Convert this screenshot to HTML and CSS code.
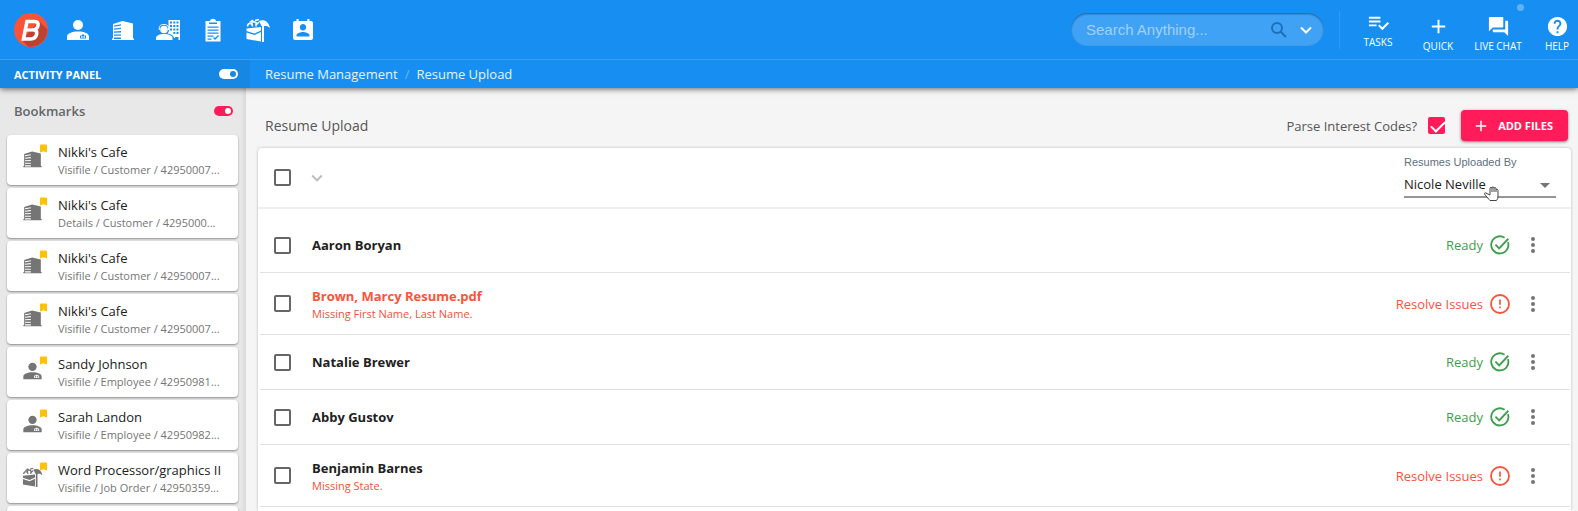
FILE: index.html
```
<!DOCTYPE html>
<html lang="en">
<head>
  <meta charset="UTF-8">
  <meta name="viewport" content="width=device-width, initial-scale=1.0">
  <title>Resume Upload</title>
  <link rel="stylesheet" href="styles.css">
</head>
<body>
  <!-- Shared icons -->
  <svg class="sprite" aria-hidden="true">
    <symbol id="i-person" viewBox="0 0 24 24">
      <circle cx="12" cy="7" r="5"/>
      <path fill-rule="evenodd" d="M1 22v-3.500C1 15.500 6 13.500 12 13.500s11 2 11 5V22zM14 17.500v3h6v-3h-2v-1h-2v1zm1 .8h1.500v1.500H15zm2.500 0H19v1.500h-1.500z"/>
    </symbol>
    <symbol id="i-building" viewBox="0 0 24 24">
      <path fill-rule="evenodd" d="M1 22v-1.500h1V6l9.500-3L22 5.500v15h1V22zM3 7.500v1.300l7-1.300V6.200zm0 3v1.300l7-.8V9.700zm0 3v1.300l7-.4v-1.300zm0 3v1.300h7v-1.300zm0 3V21h7v-1.500z"/>
    </symbol>
    <symbol id="i-contact" viewBox="0 0 24 24">
      <path fill-rule="evenodd" d="M12.500 2H24v20h-1.500v-3H19v1h-1c-.3-2-2-3.500-4.500-4l-2-.5c1.500-1.500 2-3.500 1.500-6l-.5-1zM14 3.500v2h2v-2zm3.300 0v2h2v-2zm3.200 0v2h2v-2zM14 7v2h2V7zm3.300 0v2h2V7zm3.200 0v2h2V7zM14 10.500v2h2v-2zm3.300 0v2h2v-2zm3.200 0v2h2v-2zm-3.200 3.500v2h2v-2zm3.200 0v2h2v-2z"/>
      <circle cx="8" cy="11.500" r="3.800"/>
      <path d="M3.300 12V9.500C4 6.500 6 6.500 8 6.500s4 .3 4.500 3V12" fill="none" stroke="currentColor" stroke-width="1"/>
      <path d="M0 22v-2c0-2.500 4-4 8-4s8.500 1.500 8.500 4v2z"/>
    </symbol>
    <symbol id="i-clipboard" viewBox="0 0 24 24">
      <path fill-rule="evenodd" d="M4.500 3H9c.5-3 5.500-3 6 0h4.500v20.500h-15zM8 4.500V6h8V4.500zM6.500 8.500v1.200h11V8.500zm0 3v1.200h11v-1.200zm0 3v1.200h11v-1.200zm0 3v1.200h6v-1.200zm0 3v1.200h4v-1.200zm5.500-.5 2 2 4-4-1-1-3 3-1-1z"/>
    </symbol>
    <symbol id="i-jobs" viewBox="0 0 24 24">
      <path d="M.5 10.500L15 9v3.500L8.500 15.500l-8-2.500zM.5 14.500l8 2.500L15 14v9.500L.5 21zM16 4h2v20h-2zM13 3c5-2 9.500 0 11 7l-3-2h-5.500z"/>
      <path d="M1.500 8.500q0-3 2.500-3t2.500 3M6 7V3l4 1.500v4M10 7l3-3M3.500 4.500L7 2M9 2.500l4-1" fill="none" stroke="currentColor" stroke-width="1.500"/>
    </symbol>
    <symbol id="i-badge" viewBox="0 0 24 24">
      <path d="M20 3h-1.500V1h-2.200v2H7.700V1H5.500v2H4c-1.110 0-2 .9-2 2v15c0 1.100.89 2 2 2h16c1.100 0 2-.9 2-2V5c0-1.100-.9-2-2-2zm-8 3c1.800 0 3.200 1.400 3.200 3.200S13.800 12.400 12 12.400 8.800 11 8.800 9.200 10.200 6 12 6zm6.500 12.500h-13v-1c0-2.200 4.300-3.400 6.500-3.400s6.500 1.200 6.500 3.400z"/>
    </symbol>
    <symbol id="i-chevron" viewBox="0 0 24 24">
      <path d="M7.410 8.590 12 13.170l4.590-4.580L18 10l-6 6-6-6z"/>
    </symbol>
    <symbol id="i-plus" viewBox="0 0 24 24">
      <path d="M19 13h-6v6h-2v-6H5v-2h6V5h2v6h6z"/>
    </symbol>
    <symbol id="i-flag" viewBox="0 0 8 9">
      <path d="M1 0h6q1 0 1 1v8L4 7.500 0 9V1q0-1 1-1z"/>
    </symbol>
    <symbol id="i-ready" viewBox="0 0 24 24">
      <path d="M21.500 8.500A10.300 10.300 0 1 1 17.500 3.300" fill="none" stroke="currentColor" stroke-width="2.200"/>
      <path d="M6.500 11.500l4.500 4.500L22 4.500" fill="none" stroke="currentColor" stroke-width="2.200"/>
    </symbol>
    <symbol id="i-issue" viewBox="0 0 24 24">
      <circle cx="12" cy="12" r="10.800" fill="none" stroke="currentColor" stroke-width="2.200"/>
      <path d="M11 6.500h2V13h-2zM11 15h2v2.200h-2z"/>
    </symbol>
    <symbol id="i-more" viewBox="0 0 6 18">
      <circle cx="3" cy="3" r="2"/><circle cx="3" cy="9" r="2"/><circle cx="3" cy="15" r="2"/>
    </symbol>
  </svg>

  <header class="header">
    <div class="topbar">
      <a class="logo" href="#" aria-label="Home">
        <svg viewBox="0 0 34 34">
          <circle cx="17" cy="17" r="17" fill="#fb5338"/>
          <path d="M25 8l8.500 8.500A17 17 0 0 1 14 33.500L8 27z" fill="#bf4230"/>
          <path d="M13 8.500h7.500q4.300 0 3.500 4-.6 3.300-3.500 4.200 2.800.9 2.100 4.500-.9 4.800-6 4.800H9.500z" fill="none" stroke="#fff" stroke-width="3.600"/>
          <path d="M12 17h9" stroke="#fff" stroke-width="3.200"/>
        </svg>
      </a>
      <nav class="main-nav">
        <a href="#" aria-label="Employees"><svg class="icon"><use href="#i-person"/></svg></a>
        <a href="#" aria-label="Customers"><svg class="icon"><use href="#i-building"/></svg></a>
        <a href="#" aria-label="Contacts"><svg class="icon"><use href="#i-contact"/></svg></a>
        <a href="#" aria-label="Assignments"><svg class="icon"><use href="#i-clipboard"/></svg></a>
        <a href="#" aria-label="Job orders"><svg class="icon"><use href="#i-jobs"/></svg></a>
        <a href="#" aria-label="Prospects"><svg class="icon"><use href="#i-badge"/></svg></a>
      </nav>
      <form class="search">
        <input type="text" placeholder="Search Anything..." aria-label="Search Anything">
        <button type="button" class="search-btn" aria-label="Search">
          <svg viewBox="0 0 16 16"><circle cx="6" cy="6" r="5" fill="none" stroke="currentColor" stroke-width="2"/><path d="M9.500 9.500l5.500 5.500" stroke="currentColor" stroke-width="2.200"/></svg>
        </button>
        <button type="button" class="search-more" aria-label="Search options">
          <svg viewBox="0 0 12 8"><path d="M1 1.500l5 5 5-5" fill="none" stroke="currentColor" stroke-width="2"/></svg>
        </button>
      </form>
      <div class="tools">
        <button type="button" class="tool tool-tasks">
          <svg class="icon" viewBox="0 0 24 24"><path d="M14 10H2v2h12zm0-4H2v2h12zM2 16h8v-2H2zm19.500-4.500L23 13l-6.990 7-4.510-4.500L13 14l3.010 3z"/></svg>
          <span>TASKS</span>
        </button>
        <button type="button" class="tool">
          <svg class="icon"><use href="#i-plus"/></svg>
          <span>QUICK</span>
        </button>
        <button type="button" class="tool">
          <svg class="icon" viewBox="0 0 24 24"><path d="M21 6h-2v9H6v2c0 .55.450 1 1 1h11l4 4V7c0-.55-.45-1-1-1zm-4 6V3c0-.55-.45-1-1-1H3c-.55 0-1 .45-1 1v14l4-4h10c.55 0 1-.45 1-1z"/></svg>
          <span>LIVE CHAT</span>
          <i class="dot"></i>
        </button>
        <button type="button" class="tool tool-help">
          <svg class="icon" viewBox="0 0 24 24"><path d="M12 2C6.480 2 2 6.480 2 12s4.480 10 10 10 10-4.480 10-10S17.520 2 12 2zm1 17h-2v-2h2v2zm2.070-7.750-.9.920C13.450 12.900 13 13.500 13 15h-2v-.5c0-1.100.45-2.100 1.170-2.830l1.240-1.260c.37-.36.59-.86.59-1.410 0-1.100-.9-2-2-2s-2 .9-2 2H8c0-2.210 1.790-4 4-4s4 1.790 4 4c0 .88-.36 1.680-.93 2.250z"/></svg>
          <span>HELP</span>
        </button>
      </div>
    </div>
    <div class="subbar">
      <div class="activity">
        <label for="activity">ACTIVITY PANEL</label>
        <input type="checkbox" id="activity" class="toggle toggle-light" checked>
      </div>
      <nav class="breadcrumb">
        <a href="#">Resume Management</a>
        <span class="sep">/</span>
        <a href="#">Resume Upload</a>
      </nav>
    </div>
  </header>

  <div class="layout">
    <aside class="sidebar">
      <div class="sidebar-head">
        <label for="bookmarks">Bookmarks</label>
        <input type="checkbox" id="bookmarks" class="toggle" checked>
      </div>
      <ul class="bookmarks">
        <li class="bookmark">
          <div class="bookmark-icon"><svg class="kind"><use href="#i-building"/></svg><svg class="flag"><use href="#i-flag"/></svg></div>
          <div><p class="name">Nikki's Cafe</p><p class="path">Visifile / Customer / 42950007...</p></div>
        </li>
        <li class="bookmark">
          <div class="bookmark-icon"><svg class="kind"><use href="#i-building"/></svg><svg class="flag"><use href="#i-flag"/></svg></div>
          <div><p class="name">Nikki's Cafe</p><p class="path">Details / Customer / 4295000...</p></div>
        </li>
        <li class="bookmark">
          <div class="bookmark-icon"><svg class="kind"><use href="#i-building"/></svg><svg class="flag"><use href="#i-flag"/></svg></div>
          <div><p class="name">Nikki's Cafe</p><p class="path">Visifile / Customer / 42950007...</p></div>
        </li>
        <li class="bookmark">
          <div class="bookmark-icon"><svg class="kind"><use href="#i-building"/></svg><svg class="flag"><use href="#i-flag"/></svg></div>
          <div><p class="name">Nikki's Cafe</p><p class="path">Visifile / Customer / 42950007...</p></div>
        </li>
        <li class="bookmark">
          <div class="bookmark-icon"><svg class="kind"><use href="#i-person"/></svg><svg class="flag"><use href="#i-flag"/></svg></div>
          <div><p class="name">Sandy Johnson</p><p class="path">Visifile / Employee / 42950981...</p></div>
        </li>
        <li class="bookmark">
          <div class="bookmark-icon"><svg class="kind"><use href="#i-person"/></svg><svg class="flag"><use href="#i-flag"/></svg></div>
          <div><p class="name">Sarah Landon</p><p class="path">Visifile / Employee / 42950982...</p></div>
        </li>
        <li class="bookmark">
          <div class="bookmark-icon"><svg class="kind"><use href="#i-jobs"/></svg><svg class="flag"><use href="#i-flag"/></svg></div>
          <div><p class="name">Word Processor/graphics II</p><p class="path">Visifile / Job Order / 42950359...</p></div>
        </li>
        <li class="bookmark"></li>
      </ul>
    </aside>

    <main class="main">
      <div class="page-head">
        <h1>Resume Upload</h1>
        <label for="parse">Parse Interest Codes?</label>
        <input type="checkbox" id="parse" class="check check-pink" checked>
        <button type="button" class="add-btn"><svg><use href="#i-plus"/></svg>ADD FILES</button>
      </div>

      <section class="card">
        <div class="card-head">
          <input type="checkbox" class="check" aria-label="Select all">
          <button type="button" class="expand" aria-label="Selection options"><svg><use href="#i-chevron"/></svg></button>
          <div class="field">
            <label for="uploadedBy">Resumes Uploaded By</label>
            <select id="uploadedBy">
              <option>Nicole Neville</option>
            </select>
            <svg class="caret" viewBox="0 0 10 5"><path d="M0 0h10L5 5z"/></svg>
            <svg class="pointer" viewBox="0 0 15 17"><path d="M5 14.500L.8 9.500Q0 7.800 1.500 7.800L6 10V3q.8-1.500 2 0V2.500q1-1.200 2 0v.5q1.200-1 2 .3v1q1.600-.6 2 1V11q0 3-1.500 4.500H6z" fill="#fff" stroke="#444" stroke-width="1"/><path d="M8 3v4M10 3v4M12 4v3" stroke="#444" stroke-width="1"/></svg>
          </div>
        </div>
        <ul class="rows">
          <li class="row">
            <input type="checkbox" class="check" aria-label="Aaron Boryan">
            <div class="info"><p class="person">Aaron Boryan</p></div>
            <span class="status ready">Ready<svg><use href="#i-ready"/></svg></span>
            <button type="button" class="more" aria-label="More"><svg><use href="#i-more"/></svg></button>
          </li>
          <li class="row">
            <input type="checkbox" class="check" aria-label="Brown, Marcy Resume.pdf">
            <div class="info"><p class="person error">Brown, Marcy Resume.pdf</p><p class="missing">Missing First Name, Last Name.</p></div>
            <a href="#" class="status issue">Resolve Issues<svg><use href="#i-issue"/></svg></a>
            <button type="button" class="more" aria-label="More"><svg><use href="#i-more"/></svg></button>
          </li>
          <li class="row">
            <input type="checkbox" class="check" aria-label="Natalie Brewer">
            <div class="info"><p class="person">Natalie Brewer</p></div>
            <span class="status ready">Ready<svg><use href="#i-ready"/></svg></span>
            <button type="button" class="more" aria-label="More"><svg><use href="#i-more"/></svg></button>
          </li>
          <li class="row">
            <input type="checkbox" class="check" aria-label="Abby Gustov">
            <div class="info"><p class="person">Abby Gustov</p></div>
            <span class="status ready">Ready<svg><use href="#i-ready"/></svg></span>
            <button type="button" class="more" aria-label="More"><svg><use href="#i-more"/></svg></button>
          </li>
          <li class="row">
            <input type="checkbox" class="check" aria-label="Benjamin Barnes">
            <div class="info"><p class="person">Benjamin Barnes</p><p class="missing">Missing State.</p></div>
            <a href="#" class="status issue">Resolve Issues<svg><use href="#i-issue"/></svg></a>
            <button type="button" class="more" aria-label="More"><svg><use href="#i-more"/></svg></button>
          </li>
        </ul>
      </section>
    </main>
  </div>
</body>
</html>
```
FILE: styles.css
```
* {
  margin: 0;
  padding: 0;
  box-sizing: border-box;
}

body {
  display: flex;
  flex-direction: column;
  height: 100vh;
  overflow: hidden;
  background-color: #f5f5f5;
  color: #212121;
  font-family: "Open Sans", "Noto Sans", sans-serif;
  font-size: 13px;
}

ul {
  list-style: none;
}

a {
  color: inherit;
  text-decoration: none;
}

button {
  border: none;
  background: none;
  color: inherit;
  font-family: inherit;
  cursor: pointer;
}

svg {
  display: block;
  fill: currentColor;
}

.sprite {
  position: absolute;
  width: 0;
  height: 0;
}

.icon {
  width: 24px;
  height: 24px;
}

/* Header */
.header {
  position: relative;
  z-index: 2;
  flex: none;
  background-color: #178ff2;
  color: #fff;
  box-shadow: 0 1px 6px rgba(0, 0, 0, 0.6);
}

.topbar {
  display: flex;
  align-items: center;
  height: 60px;
  padding-left: 14px;
  border-bottom: 1px solid #3a9ff5;
}

.logo svg {
  width: 34px;
  height: 34px;
}

.main-nav {
  display: flex;
  gap: 21px;
  margin-left: 18px;
}

.search {
  display: flex;
  align-items: center;
  width: 253px;
  height: 33px;
  margin-left: auto;
  padding: 0 12px 0 15px;
  border-radius: 17px;
  background-color: #40a2f5;
  box-shadow: inset 0 1px 2px rgba(0, 50, 100, 0.6);
}

.search input {
  flex: 1;
  min-width: 0;
  border: none;
  outline: none;
  background: none;
  color: #fff;
  font-family: "Liberation Sans", Arial, sans-serif;
  font-size: 15px;
}

.search input::placeholder {
  color: #a0d1fa;
}

.search-btn {
  margin-right: 13px;
  color: #1e6fb9;
}

.search-btn svg {
  width: 16px;
  height: 16px;
}

.search-more svg {
  width: 12px;
  height: 8px;
}

.tools {
  display: flex;
  align-items: flex-start;
  height: 38px;
  margin-left: 15px;
  padding-left: 8px;
  border-left: 1px solid #2f99f4;
}

.tool {
  position: relative;
  display: flex;
  flex-direction: column;
  align-items: center;
  gap: 1px;
  width: 60px;
  padding-top: 4px;
  font-size: 10px;
  line-height: 14px;
}

.tool .icon {
  width: 23px;
  height: 23px;
}

.tool-tasks {
  padding-top: 0;
}

.tool-help {
  width: 42px;
  margin-left: 8px;
}

.dot {
  position: absolute;
  top: -7px;
  right: 4px;
  width: 7px;
  height: 7px;
  border-radius: 50%;
  background-color: #5fb2f7;
}

.subbar {
  display: flex;
  height: 28px;
}

.activity {
  display: flex;
  align-items: center;
  justify-content: space-between;
  width: 250px;
  padding: 0 12px 0 14px;
  background-color: #1687e3;
  font-size: 11px;
  font-weight: 700;
}

.toggle {
  display: flex;
  align-items: center;
  justify-content: flex-end;
  width: 19px;
  height: 10px;
  padding: 2px;
  border-radius: 5px;
  background-color: #ff1c58;
  appearance: none;
}

.toggle::before {
  content: "";
  width: 6px;
  height: 6px;
  border-radius: 50%;
  background-color: #fff;
}

.toggle-light {
  background-color: #fff;
}

.toggle-light::before {
  background-color: #1687e3;
}

.breadcrumb {
  display: flex;
  align-items: center;
  gap: 7px;
  padding-left: 15px;
}

.breadcrumb a {
  color: #e6f3fe;
}

.breadcrumb .sep {
  color: #6bb7f8;
}

/* Layout */
.layout {
  display: flex;
  flex: 1;
  min-height: 0;
}

.sidebar {
  flex: none;
  width: 246px;
  padding: 0 8px 0 7px;
  overflow: hidden;
  background-color: #e8e8e8;
  box-shadow: inset -4px 0 4px -2px rgba(0, 0, 0, 0.08);
}

.sidebar-head {
  display: flex;
  align-items: center;
  justify-content: space-between;
  height: 47px;
  padding: 0 5px 1px 7px;
  color: #666;
  font-weight: 600;
}

.bookmarks {
  display: flex;
  flex-direction: column;
  gap: 3px;
}

.bookmark {
  display: flex;
  flex: none;
  align-items: center;
  height: 50px;
  padding-left: 15px;
  border-radius: 4px;
  background-color: #fff;
  box-shadow: 0 1px 2px rgba(0, 0, 0, 0.4);
}

.bookmark-icon {
  position: relative;
  width: 36px;
  height: 36px;
  padding-top: 7px;
  color: #757575;
}

.kind {
  width: 21px;
  height: 20px;
}

.flag {
  position: absolute;
  top: 2px;
  left: 18px;
  width: 7px;
  height: 9px;
  color: #ffc107;
}

.name {
  line-height: 18px;
}

.path {
  color: #757575;
  font-size: 11px;
  line-height: 17px;
}

/* Main */
.main {
  display: flex;
  flex: 1;
  flex-direction: column;
  min-width: 0;
  padding: 0 7px 0 12px;
}

.page-head {
  display: flex;
  align-items: center;
  padding: 22px 3px 7px 7px;
  color: #555;
}

h1 {
  margin-right: auto;
  font-size: 14px;
  font-weight: 400;
}

.check {
  flex: none;
  width: 17px;
  height: 17px;
  border: 2px solid #666;
  border-radius: 2px;
  background-color: #fff;
  appearance: none;
}

.check-pink {
  margin: 0 16px 0 11px;
  border: none;
  background-color: #ff1c58;
}

.check-pink::before {
  content: "";
  display: block;
  width: 12px;
  height: 6px;
  margin: 4px 0 0 3px;
  border: solid #fff;
  border-width: 0 0 2px 2px;
  transform: rotate(-45deg);
}

.add-btn {
  display: flex;
  align-items: center;
  gap: 8px;
  height: 31px;
  padding: 0 15px 0 11px;
  border-radius: 4px;
  background-color: #ff1c58;
  color: #fff;
  font-size: 11px;
  font-weight: 700;
  box-shadow: 0 1px 3px rgba(0, 0, 0, 0.5);
}

.add-btn svg {
  width: 18px;
  height: 18px;
}

.card {
  flex: 1;
  border-radius: 4px 4px 0 0;
  background-color: #fff;
  box-shadow: 0 0 3px rgba(0, 0, 0, 0.25);
}

.card-head {
  display: flex;
  align-items: center;
  height: 61px;
  padding: 0 15px 0 16px;
  border-bottom: 2px solid #eee;
}

.expand {
  margin: 0 auto 0 15px;
  color: #bdbdbd;
}

.expand svg {
  width: 22px;
  height: 22px;
}

.field {
  position: relative;
  width: 152px;
  padding-bottom: 2px;
}

.field label {
  display: block;
  color: #607080;
  font-family: "Liberation Sans", Arial, sans-serif;
  font-size: 11px;
  line-height: 14px;
}

.field select {
  width: 100%;
  height: 29px;
  padding-top: 2px;
  border: none;
  border-bottom: 2px solid #959595;
  background: none;
  color: #212121;
  font-family: inherit;
  font-size: 13px;
  appearance: none;
}

.caret {
  position: absolute;
  top: 28px;
  right: 6px;
  width: 10px;
  height: 5px;
  color: #757575;
}

.pointer {
  position: absolute;
  top: 30px;
  left: 80px;
  width: 15px;
  height: 17px;
}

.rows {
  padding: 9px 1px 0 2px;
}

.row {
  display: flex;
  align-items: center;
  min-height: 55px;
  padding: 13px 34px 13px 14px;
  border-bottom: 1px solid #e0e0e0;
}

.info {
  flex: 1;
  min-width: 0;
  margin-left: 21px;
}

.person {
  font-weight: 700;
  line-height: 20px;
}

.person.error {
  color: #fb5338;
}

.missing {
  color: #f0523c;
  font-size: 11px;
  line-height: 15px;
}

.status {
  display: flex;
  align-items: center;
  gap: 7px;
}

.status svg {
  width: 20px;
  height: 20px;
}

.ready {
  color: #3f9e4d;
}

.issue {
  color: #f9533b;
}

.more {
  margin-left: 20px;
  color: #757575;
}

.more svg {
  width: 6px;
  height: 18px;
}
```
